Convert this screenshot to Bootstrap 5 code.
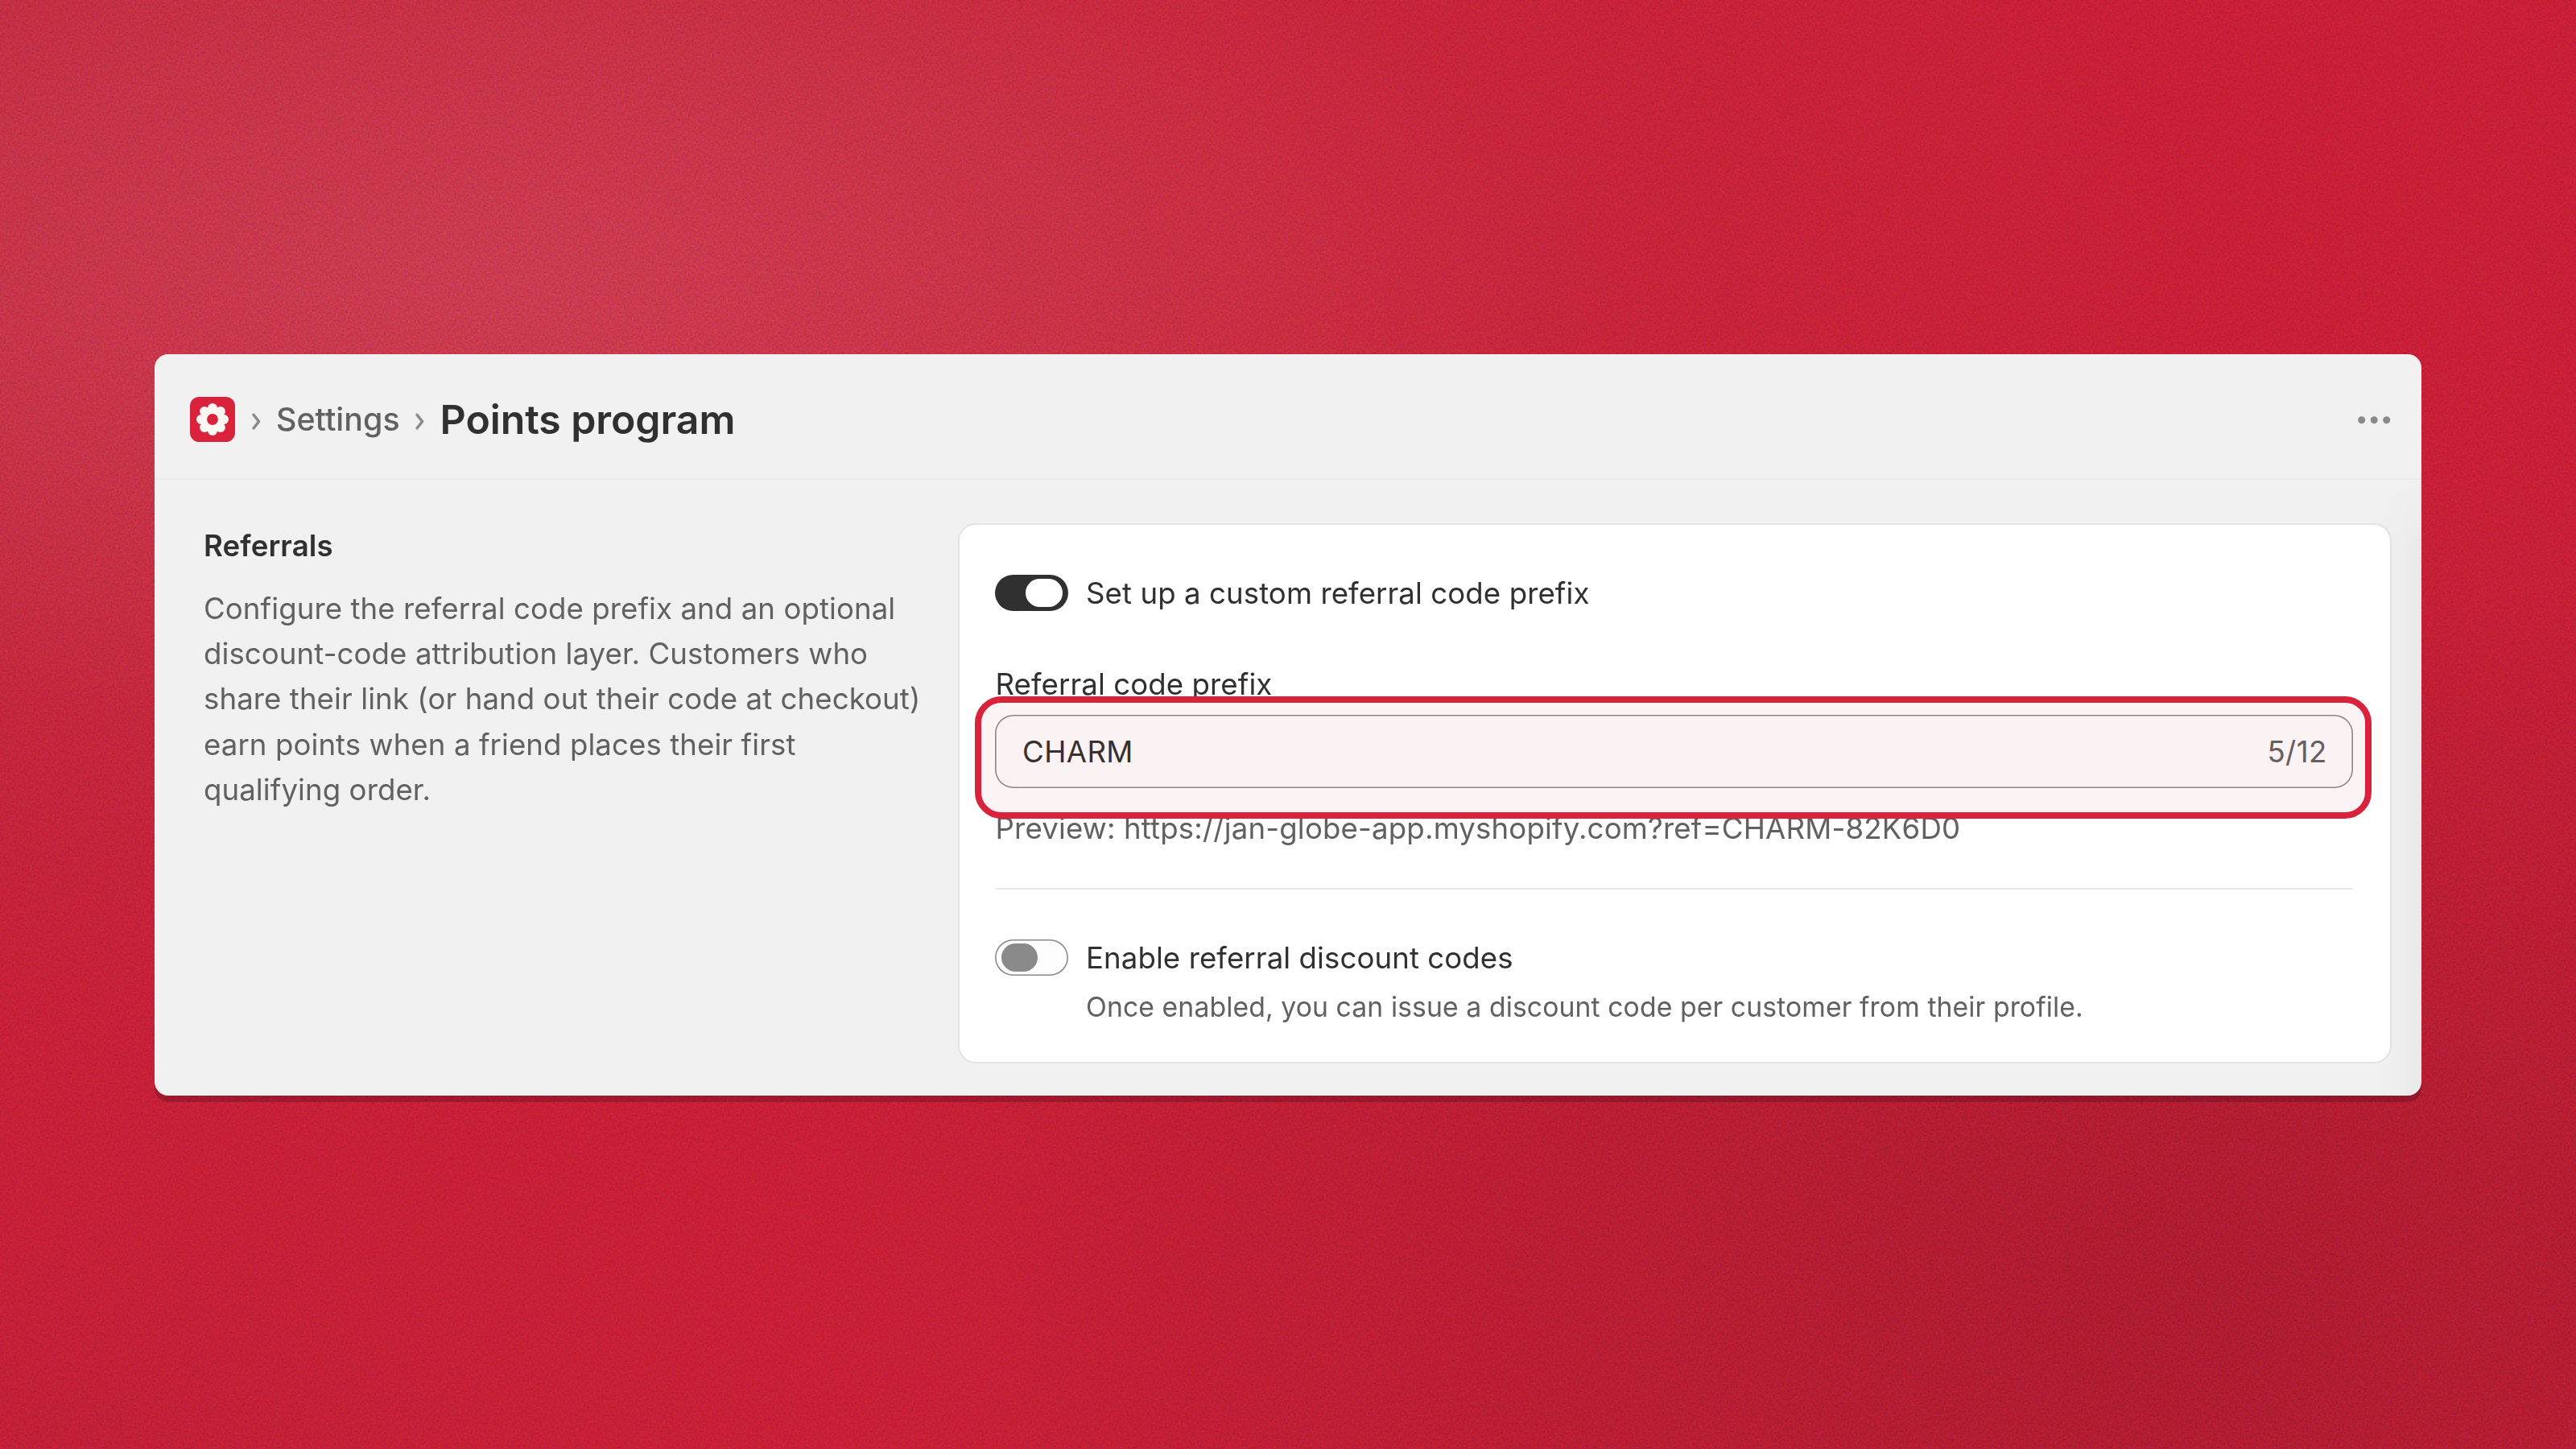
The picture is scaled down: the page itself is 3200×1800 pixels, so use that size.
<!DOCTYPE html>
<html lang="en">
<head>
<meta charset="utf-8">
<meta name="viewport" content="width=device-width, initial-scale=1">
<title>Points program</title>
<link href="https://cdn.jsdelivr.net/npm/bootstrap@5.3.0/dist/css/bootstrap.min.css" rel="stylesheet">
<style>
  body {
    width: 3200px;
    height: 1800px;
    overflow: hidden;
    font-family: Inter, "Liberation Sans", sans-serif;
    font-size: 36.61px;
    line-height: 56.3px;
    letter-spacing: .08px;
    color: #303030;
    background:
      radial-gradient(ellipse 2100px 900px at 640px 360px, rgba(205, 66, 86, .8) 0%, rgba(202, 60, 78, .62) 35%, rgba(196, 46, 64, .34) 65%, rgba(196, 36, 54, 0) 100%),
      radial-gradient(ellipse 1400px 1300px at 0 200px, rgba(178, 44, 70, .5), rgba(188, 44, 68, 0)),
      radial-gradient(ellipse 1700px 1050px at 2720px 1620px, rgba(162, 26, 46, .72), rgba(170, 28, 48, .54) 40%, rgba(190, 30, 50, 0)),
      radial-gradient(ellipse 900px 500px at 100px 1800px, rgba(182, 32, 54, .4), rgba(190, 30, 50, 0)),
      #c81f37;
  }
  .grain { inset: 0; width: 3200px; height: 1800px; opacity: .3; mix-blend-mode: overlay; }
  .stage { padding: 440px 192px 0; }
  .app-window {
    position: relative;
    height: 921px;
    border-radius: 17px;
    background: #f1f1f1;
    box-shadow: 0 8px 0 rgba(70, 10, 25, .3);
  }
  .app-head { height: 156px; padding: 8px 38px 0 44px; border-bottom: 2px solid #e9e9e9; }
  .crumb { font-size: 39.42px; font-weight: 450; color: #616161; letter-spacing: 0; margin-left: 7px; }
  .chevron { width: 28px; height: 28px; fill: none; stroke: #8a8a8a; stroke-width: 3.4; stroke-linecap: round; stroke-linejoin: round; }
  .chevron-next { margin-left: 14.5px; }
  .crumb-title { font-size: 50px; font-weight: 600; letter-spacing: -.1px; line-height: 60px; margin-left: 7.5px; }
  .app-body { padding: 54px 37px 0 61px; }
  .intro { width: 920px; }
  .intro-title { font-size: inherit; line-height: inherit; }
  .intro-text { margin-top: 21.6px; color: #616161; }
  .panel {
    width: 1781px;
    height: 671px;
    margin-left: auto;
    padding: 56.3px 46.3px 0 44px;
    border: 2px solid #e3e3e3;
    border-radius: 22px;
    background: #fff;
  }
  .toggle {
    width: 91px;
    height: 45px;
    border-radius: 23px;
    padding: 5px 7px;
    flex: none;
  }
  .toggle-on { background: #303030; justify-content: flex-end; }
  .toggle-off { background: #fdfdfd; box-shadow: inset 0 0 0 1.6px #8a8a8a; }
  .knob { width: 46px; height: 35px; border-radius: 18px; background: #fff; }
  .toggle-off .knob { width: 45px; background: #8a8a8a; margin-left: 1px; }
  .opt-row { gap: 22px; height: 56.3px; }
  .opt-label { padding-top: 1.4px; }
  .field-label { margin-top: 56.5px; height: 67px; padding: .8px 0 0 .5px; }
  .code-field {
    position: relative;
    height: 91px;
    border-radius: 23px;
    padding: 1.4px 32px 0 34px;
    box-shadow: inset 0 0 0 1.6px #8a8a8a;
    background: #fdfdfd;
    letter-spacing: .4px;
  }
  .code-count { color: #616161; }
  /* annotation ring laid over the field */
  .ring {
    left: -25px;
    right: -23.3px;
    top: -23px;
    height: 152px;
    border: 8px solid #d9233d;
    border-radius: 33px;
    background: rgba(217, 35, 61, .05);
    background-clip: padding-box;
    z-index: 2;
  }
  .preview { margin-top: 21.7px; color: #616161; letter-spacing: .16px; padding-left: .5px; }
  .rule { height: 2px; background: #e9e9e9; margin-top: 45.8px; }
  .opt-second { margin-top: 56.2px; }
  .opt-help { font-size: 33.79px; letter-spacing: .065px; color: #616161; margin: 5.2px 0 0 113px; }
  .edge-shade {
    top: 156px;
    right: 0;
    bottom: 0;
    width: 56px;
    border-radius: 0 0 17px 0;
    background: linear-gradient(to right, rgba(0, 0, 0, 0), rgba(0, 0, 0, .008) 40%, rgba(0, 0, 0, .03));
    -webkit-mask-image: linear-gradient(transparent, #000 90px);
    mask-image: linear-gradient(transparent, #000 90px);
  }
</style>
<script src="https://cdn.jsdelivr.net/npm/bootstrap@5.3.0/dist/js/bootstrap.bundle.min.js"></script>
</head>
<body>
<svg class="grain position-absolute" aria-hidden="true">
  <filter id="grain" x="0" y="0" width="100%" height="100%" color-interpolation-filters="sRGB">
    <feTurbulence type="fractalNoise" baseFrequency="0.4" numOctaves="3" seed="4"/>
    <feColorMatrix type="matrix" values="1.6 0 0 0 -.3  0 1.6 0 0 -.3  0 0 1.6 0 -.3  0 0 0 0 1"/>
  </filter>
  <rect width="3200" height="1800" filter="url(#grain)"/>
</svg>
<main class="stage">
  <section class="app-window">
    <header class="app-head d-flex align-items-center">
      <svg width="56" height="56" viewBox="0 0 56 56" aria-hidden="true">
        <rect width="56" height="56" rx="11.5" fill="#d9233d"/>
        <g fill="#fff7f4">
          <circle cx="28" cy="28" r="15"/>
          <circle cx="28" cy="14" r="6"/><circle cx="37.9" cy="18.1" r="6"/>
          <circle cx="42" cy="28" r="6"/><circle cx="37.9" cy="37.9" r="6"/>
          <circle cx="28" cy="42" r="6"/><circle cx="18.1" cy="37.9" r="6"/>
          <circle cx="14" cy="28" r="6"/><circle cx="18.1" cy="18.1" r="6"/>
        </g>
        <circle cx="28" cy="28" r="6.9" fill="#d9233d"/>
      </svg>
      <svg class="chevron ms-3" viewBox="0 0 28 28" aria-hidden="true"><path d="M7 8.2 13.6 16.6 7 25"/></svg>
      <a class="crumb text-decoration-none">Settings</a>
      <svg class="chevron chevron-next" viewBox="0 0 28 28" aria-hidden="true"><path d="M7 8.2 13.6 16.6 7 25"/></svg>
      <h1 class="crumb-title mb-0">Points program</h1>
      <svg class="ms-auto" width="42" height="12" viewBox="0 0 42 12" fill="#8a8a8a" aria-hidden="true"><circle cx="5.7" cy="6.8" r="4.5"/><circle cx="21.2" cy="6.8" r="4.5"/><circle cx="36.7" cy="6.8" r="4.5"/></svg>
    </header>
    <div class="app-body d-flex">
      <div class="intro">
        <h2 class="intro-title fw-semibold mb-0">Referrals</h2>
        <p class="intro-text mb-0">Configure the referral code prefix and an optional<br>discount-code attribution layer. Customers who<br>share their link (or hand out their code at checkout)<br>earn points when a friend places their first<br>qualifying order.</p>
      </div>
      <div class="panel">
        <div class="opt-row d-flex align-items-center">
          <div class="toggle toggle-on d-flex"><div class="knob"></div></div>
          <div class="opt-label">Set up a custom referral code prefix</div>
        </div>
        <div class="field-label">Referral code prefix</div>
        <div class="code-field d-flex align-items-center justify-content-between">
          <span>CHARM</span>
          <span class="code-count">5/12</span>
          <div class="ring position-absolute"></div>
        </div>
        <div class="preview">Preview: https://jan-globe-app.myshopify.com?ref=CHARM-82K6D0</div>
        <div class="rule"></div>
        <div class="opt-second opt-row d-flex align-items-center">
          <div class="toggle toggle-off d-flex"><div class="knob"></div></div>
          <div class="opt-label">Enable referral discount codes</div>
        </div>
        <div class="opt-help">Once enabled, you can issue a discount code per customer from their profile.</div>
      </div>
    </div>
    <div class="edge-shade position-absolute"></div>
  </section>
</main>
</body>
</html>
